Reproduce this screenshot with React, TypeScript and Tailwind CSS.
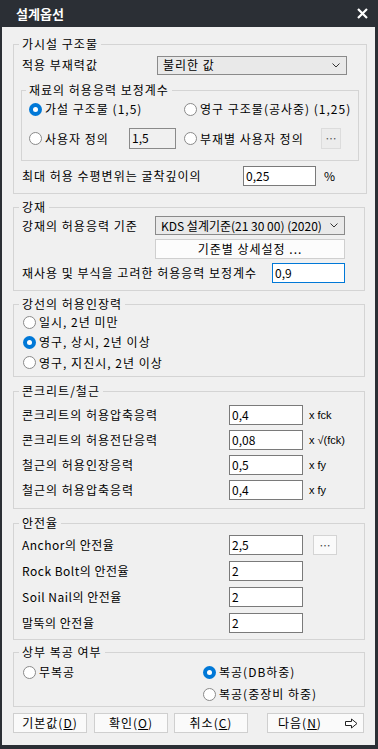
import React from "react";

type RadioProps = { checked?: boolean; label: string; className?: string };

function Radio({ checked, label, className }: RadioProps) {
  return (
    <span className={"flex items-center gap-[3px] " + (className ?? "")}>
      {checked ? (
        <span className="w-[13px] h-[13px] rounded-full bg-[#0078d7] flex items-center justify-center shrink-0">
          <span className="w-[5px] h-[5px] rounded-full bg-white" />
        </span>
      ) : (
        <span className="w-[13px] h-[13px] rounded-full border border-[#8a8a8a] bg-white shrink-0" />
      )}
      <span className="whitespace-nowrap">{label}</span>
    </span>
  );
}

function Field({ value, className }: { value: string; className?: string }) {
  return (
    <div className={"h-[20px] shrink-0 border px-[2px] leading-[18px] tracking-normal whitespace-nowrap " + (className ?? "w-[74px] border-[#7a7a7a] bg-white")}>
      {value}
    </div>
  );
}

function Chevron() {
  return (
    <svg width="8" height="5" viewBox="0 0 8 5" className="shrink-0">
      <path d="M0.5 0.5 L4 4 L7.5 0.5" fill="none" stroke="#333" strokeWidth="1" />
    </svg>
  );
}

function Select({ value, className }: { value: string; className?: string }) {
  return (
    <div className={"w-[190px] h-[19px] shrink-0 border border-[#8a8a8a] bg-[#e9e9e9] flex items-center justify-between pl-[5px] pr-[6px] " + (className ?? "")}>
      <span className="whitespace-nowrap">{value}</span>
      <Chevron />
    </div>
  );
}

function Group({ title, className, children }: { title: string; className?: string; children: React.ReactNode }) {
  return (
    <fieldset className={"border border-[#d4d4d4] " + (className ?? "")}>
      <legend className="-ml-[3px] px-[3px] leading-[16px]">{title}</legend>
      {children}
    </fieldset>
  );
}

function Btn({ children, className }: { children: React.ReactNode; className?: string }) {
  return (
    <div className={"h-[20px] border border-[#cfcfcf] bg-[#fafafa] flex items-center whitespace-nowrap " + (className ?? "justify-center")}>
      {children}
    </div>
  );
}

export default function App() {
  return (
    <div className="w-[378px] h-[749px] bg-[#2b2f35] flex flex-col font-['Noto_Sans_CJK_KR','Noto_Sans',sans-serif] text-[12px] tracking-[1px] text-black">
      <div className="h-[27px] shrink-0 flex items-center justify-between pl-[16px] pr-[10px]">
        <span className="text-white font-bold text-[13px] tracking-normal">설계옵선</span>
        <svg width="11" height="11" viewBox="0 0 11 11">
          <path d="M1 1 L10 10 M10 1 L1 10" stroke="#fff" strokeWidth="2.2" />
        </svg>
      </div>

      <div className="ml-[2px] mr-[3px] mb-[4px] flex-1 bg-[#f0f0f0] pl-[11px] pr-[10px] pt-[9px] flex flex-col">
        {/* 가시설 구조물 */}
        <Group title="가시설 구조물" className="px-[8px] pb-[7px]">
          <div className="mt-[3px] h-[20px] flex items-center">
            <span className="w-[135px] shrink-0">적용 부재력값</span>
            <Select value="불리한 값" />
          </div>
          <Group title="재료의 허용응력 보정계수" className="mt-[7px] -mx-[1px] px-[7px] pb-[11px]">
            <div className="mt-[1px] h-[20px] flex items-center">
              <Radio checked label="가설 구조물 (1,5)" className="w-[155px] shrink-0" />
              <Radio label="영구 구조물(공사중) (1,25)" />
            </div>
            <div className="mt-[9px] h-[21px] flex items-center">
              <Radio label="사용자 정의" className="w-[100px] shrink-0" />
              <Field value="1,5" className="w-[47px] h-[21px] border-[#8a8a8a] bg-[#f0f0f0]" />
              <Radio label="부재별 사용자 정의" className="ml-[8px] w-[137px] shrink-0" />
              <div className="w-[20px] h-[21px] border border-[#dcdcdc] bg-[#ececec] flex items-center justify-center text-[#555] text-[11px] tracking-normal">…</div>
            </div>
          </Group>
          <div className="mt-[5px] h-[20px] flex items-center">
            <span className="w-[221px] shrink-0 whitespace-nowrap">최대 허용 수평변위는 굴착깊이의</span>
            <Field value="0,25" className="w-[73px] border-[#7a7a7a] bg-white" />
            <span className="ml-[8px]">%</span>
          </div>
        </Group>

        {/* 강재 */}
        <Group title="강재" className="mt-[5px] px-[8px] pb-[7px]">
          <div className="mt-[1px] h-[19px] flex items-center">
            <span className="w-[133px] shrink-0 whitespace-nowrap">강재의 허용응력 기준</span>
            <Select value="KDS 설계기준(21 30 00) (2020)" className="tracking-normal" />
          </div>
          <Btn className="mt-[4px] ml-[133px] w-[190px] bg-[#fcfcfc] justify-center">기준별 상세설정 ...</Btn>
          <div className="mt-[4px] h-[20px] flex items-center">
            <span className="w-[250px] shrink-0 whitespace-nowrap">재사용 및 부식을 고려한 허용응력 보정계수</span>
            <Field value="0,9" className="w-[73px] border-[#0078d7] bg-white" />
          </div>
        </Group>

        {/* 강선의 허용인장력 */}
        <Group title="강선의 허용인장력" className="mt-[5px] px-[8px] pb-[3px]">
          <div className="pl-[1px] flex flex-col">
            <div className="h-[20px] flex items-center"><Radio label="일시, 2년 미만" /></div>
            <div className="h-[20px] flex items-center"><Radio checked label="영구, 상시, 2년 이상" /></div>
            <div className="h-[21px] flex items-center"><Radio label="영구, 지진시, 2년 이상" /></div>
          </div>
        </Group>

        {/* 콘크리트/철근 */}
        <Group title="콘크리트/철근" className="mt-[6px] px-[8px] pb-[8px]">
          <div className="mt-[6px] flex flex-col gap-[5px]">
            {[
              ["콘크리트의 허용압축응력", "0,4", "x fck"],
              ["콘크리트의 허용전단응력", "0,08", "x √(fck)"],
              ["철근의 허용인장응력", "0,5", "x fy"],
              ["철근의 허용압축응력", "0,4", "x fy"],
            ].map(([label, v, unit]) => (
              <div key={label} className="h-[20px] flex items-center">
                <span className="w-[207px] shrink-0 whitespace-nowrap">{label}</span>
                <Field value={v} />
                <span className="ml-[6px] text-[11px] tracking-normal font-['Liberation_Sans',sans-serif]">{unit}</span>
              </div>
            ))}
          </div>
        </Group>

        {/* 안전율 */}
        <Group title="안전율" className="mt-[6px] px-[8px] pb-[6px]">
          <div className="mt-[4px] flex flex-col gap-[6px]">
            <div className="h-[20px] flex items-center">
              <span className="w-[207px] shrink-0 whitespace-nowrap tracking-[0.5px]">Anchor의 안전율</span>
              <Field value="2,5" />
              <div className="ml-[10px] w-[24px] h-[20px] border border-[#d4d4d4] bg-[#fafafa] flex items-center justify-center text-[#444] text-[11px] tracking-normal">…</div>
            </div>
            {[
              ["Rock Bolt의 안전율", "2"],
              ["Soil Nail의 안전율", "2"],
              ["말뚝의 안전율", "2"],
            ].map(([label, v]) => (
              <div key={label} className="h-[20px] flex items-center">
                <span className="w-[207px] shrink-0 whitespace-nowrap tracking-[0.5px]">{label}</span>
                <Field value={v} />
              </div>
            ))}
          </div>
        </Group>

        {/* 상부 복공 여부 */}
        <Group title="상부 복공 여부" className="mt-[4px] px-[8px] pb-[2px]">
          <div className="mt-[2px] pl-[1px] flex">
            <div className="w-[180px] shrink-0 h-[20px] flex items-center">
              <Radio label="무복공" />
            </div>
            <div className="flex flex-col gap-[2px]">
              <div className="h-[20px] flex items-center"><Radio checked label="복공(DB하중)" /></div>
              <div className="h-[20px] flex items-center"><Radio label="복공(중장비 하중)" /></div>
            </div>
          </div>
        </Group>

        <div className="mt-[6px] flex">
          <Btn className="w-[74px] justify-center">기본값(<span className="underline">D</span>)</Btn>
          <Btn className="ml-[7px] w-[74px] justify-center">확인(<span className="underline">O</span>)</Btn>
          <Btn className="ml-[6px] w-[74px] justify-center">취소(<span className="underline">C</span>)</Btn>
          <Btn className="ml-[19px] w-[97px] justify-between pl-[10px] pr-[5px]">
            <span>다음(<span className="underline">N</span>)</span>
            <svg width="13" height="11" viewBox="0 0 13 11">
              <path d="M0.5 3.5 H6.5 V1 L12 5.5 L6.5 10 V7.5 H0.5 Z" fill="#fff" stroke="#222" strokeWidth="1" />
            </svg>
          </Btn>
        </div>
      </div>
    </div>
  );
}
